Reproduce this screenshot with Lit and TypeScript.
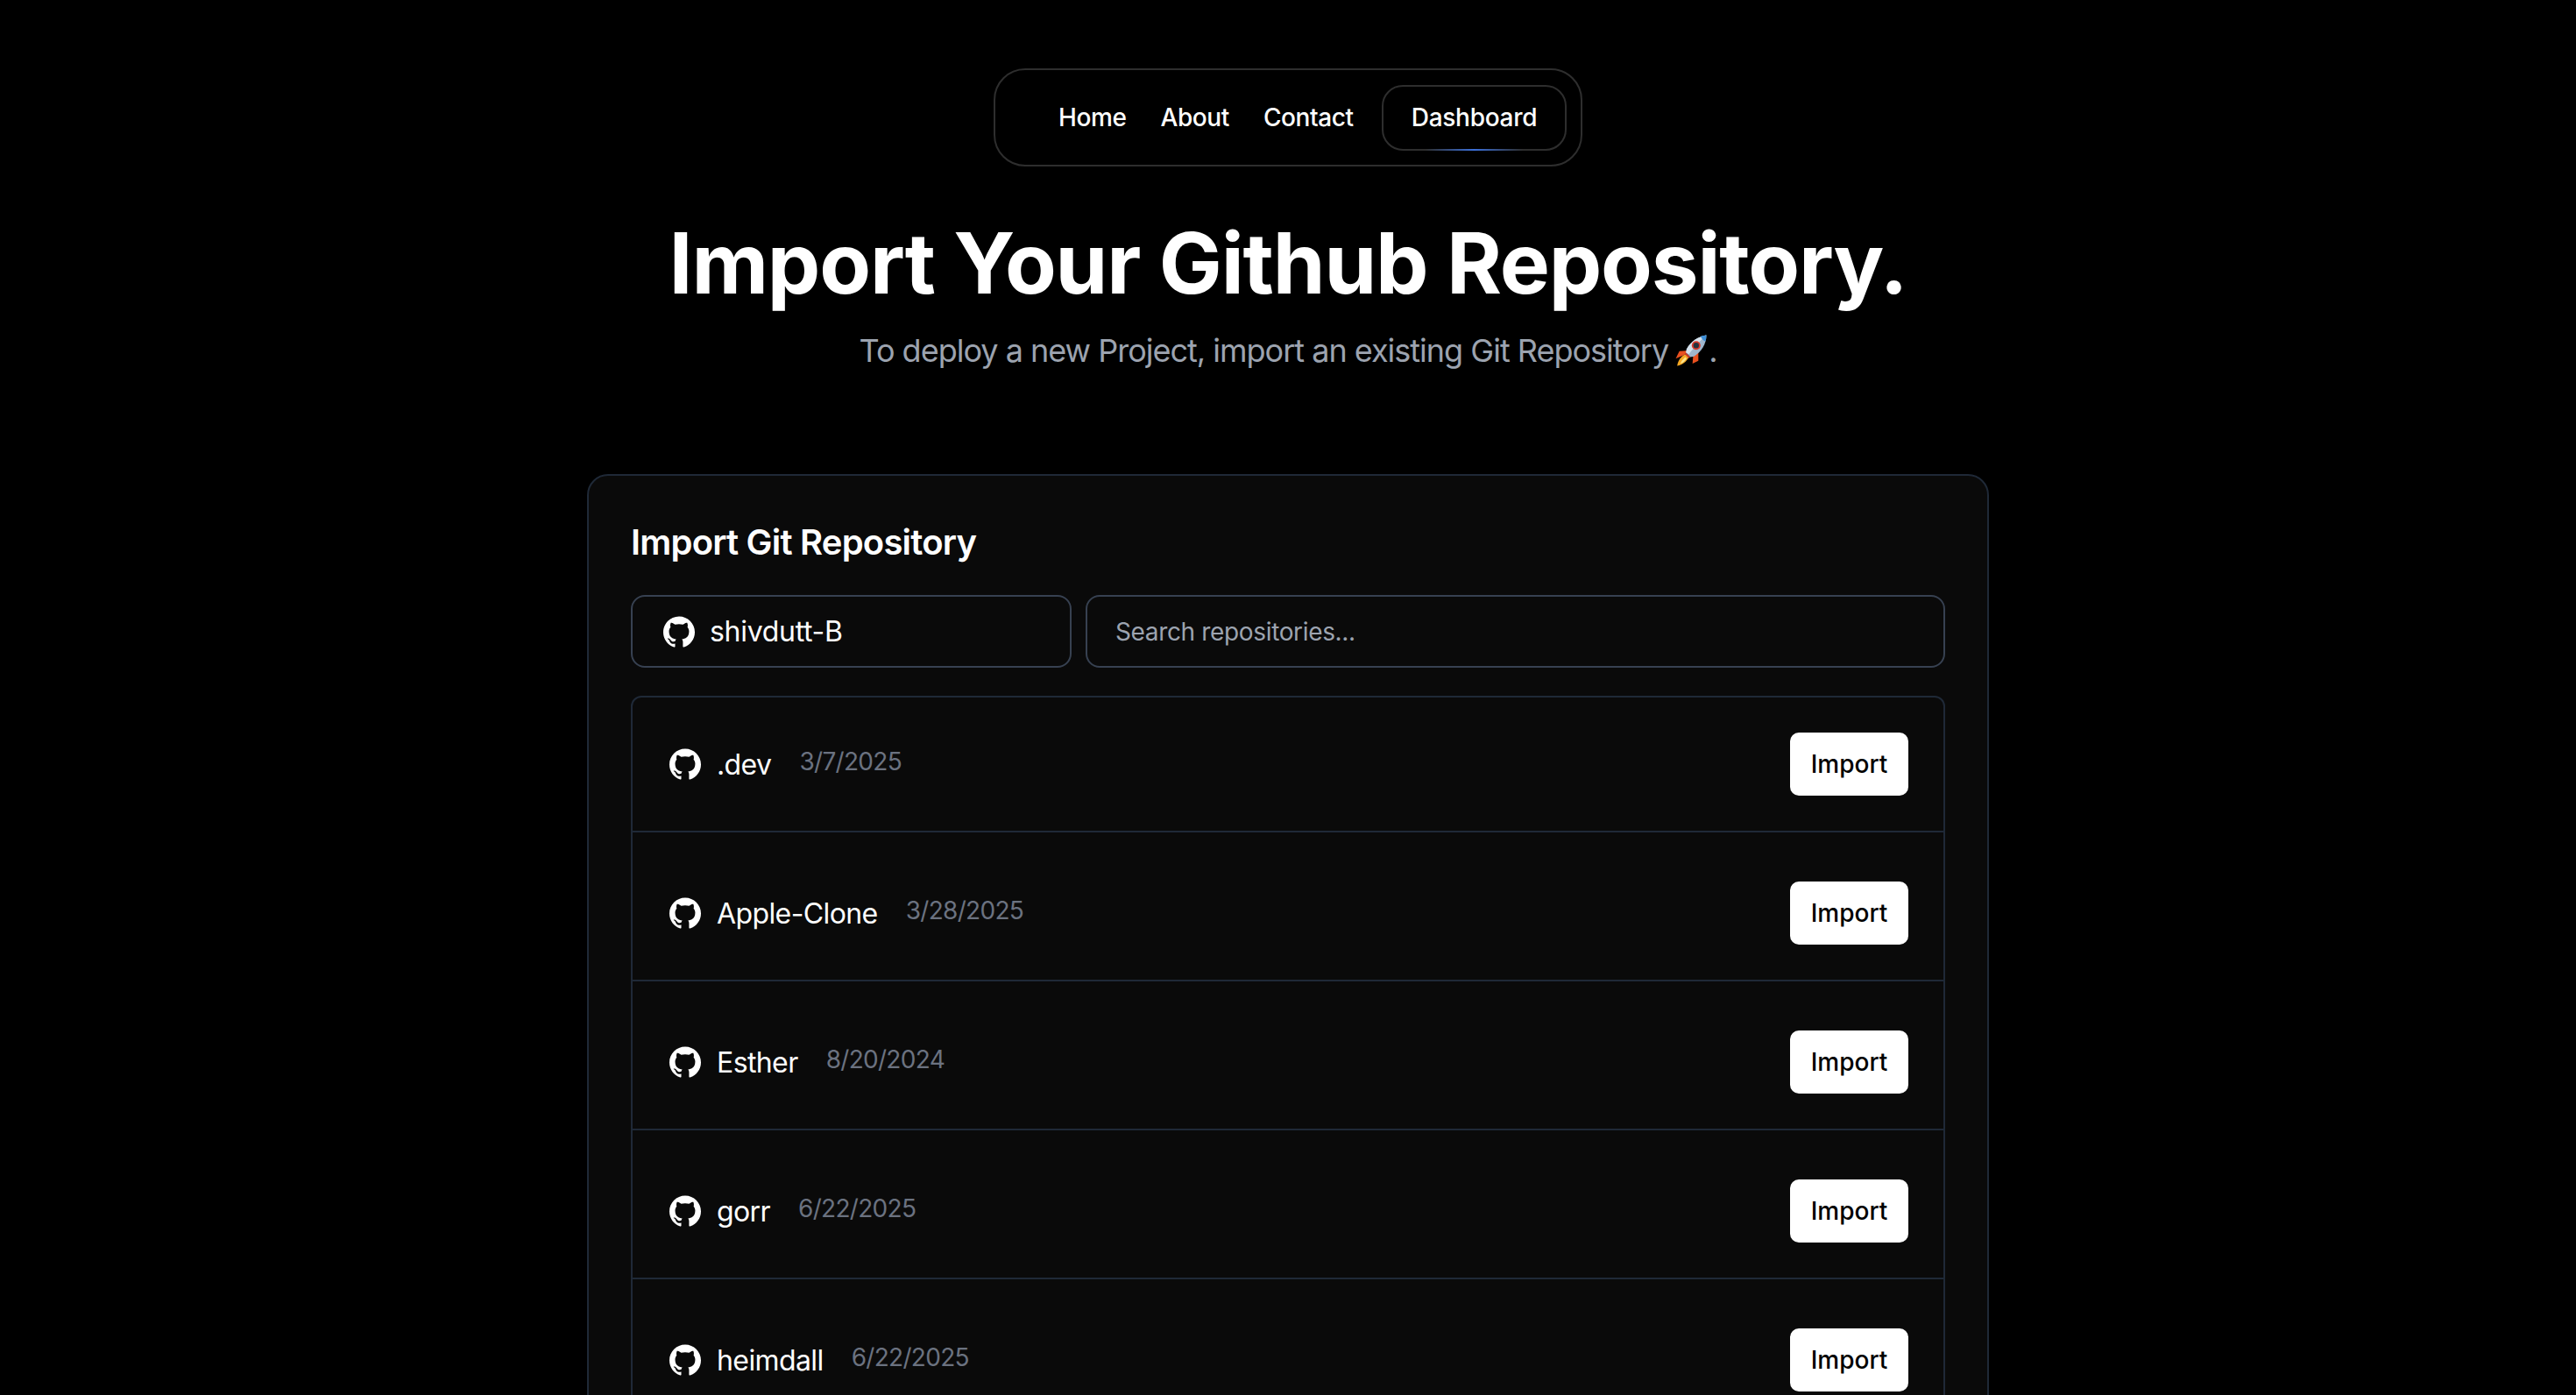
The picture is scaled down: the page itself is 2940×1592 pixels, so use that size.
import { LitElement, html, css, svg } from 'lit';
import { customElement } from 'lit/decorators.js';

const repos = [
  { name: '.dev', date: '3/7/2025' },
  { name: 'Apple-Clone', date: '3/28/2025' },
  { name: 'Esther', date: '8/20/2024' },
  { name: 'gorr', date: '6/22/2025' },
  { name: 'heimdall', date: '6/22/2025' },
];

const githubIcon = html`<svg class="gh" viewBox="0 0 24 24" fill="#fff"><path d="M12 .297c-6.63 0-12 5.373-12 12 0 5.303 3.438 9.8 8.205 11.385.6.113.82-.258.82-.577 0-.285-.01-1.04-.015-2.04-3.338.724-4.042-1.61-4.042-1.61C4.422 18.07 3.633 17.7 3.633 17.7c-1.087-.744.084-.729.084-.729 1.205.084 1.838 1.236 1.838 1.236 1.07 1.835 2.809 1.305 3.495.998.108-.776.417-1.305.76-1.605-2.665-.3-5.466-1.332-5.466-5.93 0-1.31.465-2.38 1.235-3.22-.135-.303-.54-1.523.105-3.176 0 0 1.005-.322 3.3 1.23.96-.267 1.98-.399 3-.405 1.02.006 2.04.138 3 .405 2.28-1.552 3.285-1.23 3.285-1.23.645 1.653.24 2.873.12 3.176.765.84 1.23 1.91 1.23 3.22 0 4.61-2.805 5.625-5.475 5.92.42.36.81 1.096.81 2.22 0 1.606-.015 2.896-.015 3.286 0 .315.21.69.825.57C20.565 22.092 24 17.592 24 12.297c0-6.627-5.373-12-12-12"/></svg>`;

// the rocket emoji, no colour emoji font here
const rocket = svg`
  <path d="M21 24 L8 25 L3 35 L15 30 Z" fill="#e8501f"/>
  <path d="M27 30 L26 42 L34 38 L34 26 Z" fill="#e8501f"/>
  <path d="M17 29 C11 31 6 37 5 45 C12 44 18 39 21 33 Z" fill="#f7a823"/>
  <path d="M16 33 C13 36 10 39 9.5 42 C13 41 16 38 18 35 Z" fill="#fde68a"/>
  <path d="M18 22 C24 11 34 5 45 3 C45 15 38 26 28 32 L23 33 L17 27 Z" fill="#9fb6cc"/>
  <path d="M18 22 C24 11 34 5 45 3 C38 9 28 20 21 29 L17 27 Z" fill="#d5e2ec"/>
  <path d="M37 4.6 C40 3.8 43 3.2 45 3 C45 6 44.5 9 43.6 11.5 C41 10.5 38.5 8 37 4.6 Z" fill="#3f8fd6"/>
  <circle cx="31" cy="17" r="6" fill="#d93a2b"/>
  <circle cx="31" cy="17" r="3.8" fill="#26323f"/>
  <path d="M17 27 L23 33 L21 34.5 L15.5 29 Z" fill="#c7392a"/>
`;

@customElement('app-root')
export class AppRoot extends LitElement {
  static styles = css`
    :host {
      display: block;
      height: 1592px;
      overflow: hidden;
      background: #000;
      color: #fff;
      font-family: Inter, "Noto Sans", sans-serif;
    }
    main {
      display: flex;
      flex-direction: column;
      align-items: center;
      padding-top: 78px;
    }
    .nav {
      display: flex;
      align-items: center;
      box-sizing: border-box;
      width: 672px;
      height: 112px;
      padding: 0 16px 0 52px;
      border: 2px solid #2e2e2e;
      border-radius: 36px;
      font-size: 28px;
      font-weight: 500;
      line-height: 40px;
      letter-spacing: -0.4px;
    }
    .nav a {
      padding: 0 20px;
      margin-right: -1px;
    }
    .nav a:nth-child(3) {
      margin-right: auto;
    }
    .nav .active {
      position: relative;
      box-sizing: border-box;
      width: 211px;
      height: 75px;
      padding: 0;
      margin: 0;
      display: flex;
      align-items: center;
      justify-content: center;
      border: 2px solid #2e2e2e;
      border-radius: 24px;
      letter-spacing: -0.3px;
    }
    .active::after {
      content: "";
      position: absolute;
      left: 48px;
      right: 48px;
      bottom: -2px;
      height: 2px;
      background: linear-gradient(90deg, transparent, #3b6fd8, transparent);
    }
    h1 {
      margin: 62px 0 0;
      font-size: 96px;
      line-height: 96px;
      font-weight: 700;
      letter-spacing: -1.15px;
    }
    .sub {
      margin: 24px 0 0;
      display: flex;
      align-items: center;
      font-size: 36px;
      line-height: 56px;
      color: #9ca3af;
      letter-spacing: -1px;
    }
    .sub svg {
      width: 40px;
      height: 40px;
      margin: 0 0 0 6px;
    }
    .card {
      box-sizing: border-box;
      width: 1600px;
      margin-top: 113px;
      padding: 48px;
      background: #0a0a0a;
      border: 2px solid #1f2937;
      border-radius: 24px;
    }
    h2 {
      margin: 0 0 32px;
      font-size: 40px;
      line-height: 56px;
      font-weight: 600;
      letter-spacing: -0.8px;
    }
    .controls {
      display: flex;
      gap: 16px;
      margin-bottom: 32px;
    }
    .select, .search {
      box-sizing: border-box;
      height: 83px;
      display: flex;
      align-items: center;
      border: 2px solid #374151;
      border-radius: 16px;
    }
    .select {
      width: 503px;
      flex: none;
      padding: 0 32px 0 35px;
      gap: 17px;
      font-size: 32px;
      letter-spacing: -0.3px;
    }
    .search {
      flex: 1;
      padding: 0 32px;
      font-size: 28px;
      color: #9ca3af;
      letter-spacing: -0.35px;
    }
    .gh {
      width: 36px;
      height: 36px;
      flex: none;
    }
    .list {
      border: 2px solid #1f2937;
      border-radius: 12px;
    }
    .row {
      display: flex;
      align-items: center;
      justify-content: space-between;
      padding: 40px;
      border-bottom: 2px solid #1f2937;
    }
    .row + .row {
      margin-top: 16px;
    }
    .info {
      display: flex;
      align-items: center;
      padding-left: 2px;
    }
    .name {
      margin-left: 18px;
      font-size: 32px;
      letter-spacing: -0.6px;
    }
    .date {
      margin: -6px 0 0 32px;
      font-size: 28px;
      color: #6b7280;
      letter-spacing: -0.7px;
    }
    button {
      box-sizing: border-box;
      width: 135px;
      height: 72px;
      padding: 0;
      border: 0;
      border-radius: 10px;
      background: #fff;
      color: #000;
      font: 500 28px Inter, "Noto Sans", sans-serif;
    }
  `;

  render() {
    return html`
      <main>
        <nav class="nav">
          <a>Home</a>
          <a>About</a>
          <a>Contact</a>
          <a class="active">Dashboard</a>
        </nav>
        <h1>Import Your Github Repository.</h1>
        <p class="sub">To deploy a new Project, import an existing Git Repository <svg viewBox="0 0 48 48">${rocket}</svg>.</p>
        <section class="card">
          <h2>Import Git Repository</h2>
          <div class="controls">
            <div class="select">${githubIcon}<span>shivdutt-B</span></div>
            <div class="search">Search repositories...</div>
          </div>
          <div class="list">
            ${repos.map(r => html`
              <div class="row">
                <div class="info">
                  ${githubIcon}
                  <span class="name">${r.name}</span>
                  <span class="date">${r.date}</span>
                </div>
                <button>Import</button>
              </div>
            `)}
          </div>
        </section>
      </main>
    `;
  }
}
